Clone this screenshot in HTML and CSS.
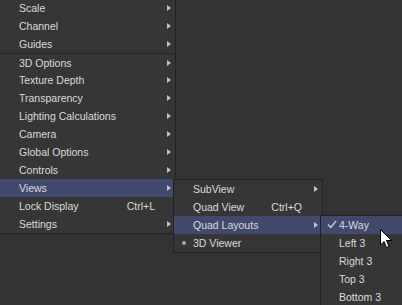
FILE: index.html
```html
<!DOCTYPE html>
<html lang="en">
<head>
    <meta charset="UTF-8">
    <title>Viewer Menu</title>
    <link rel="stylesheet" href="styles.css">
</head>
<body>
    <div class="menu main-menu">
        <div class="item">Scale<span class="arrow"></span></div>
        <div class="item">Channel<span class="arrow"></span></div>
        <div class="item">Guides<span class="arrow"></span></div>
        <div class="item sep">3D Options<span class="arrow"></span></div>
        <div class="item">Texture Depth<span class="arrow"></span></div>
        <div class="item">Transparency<span class="arrow"></span></div>
        <div class="item">Lighting Calculations<span class="arrow"></span></div>
        <div class="item">Camera<span class="arrow"></span></div>
        <div class="item">Global Options<span class="arrow"></span></div>
        <div class="item">Controls<span class="arrow"></span></div>
        <div class="item active">Views<span class="arrow"></span></div>
        <div class="item">Lock Display<span class="shortcut">Ctrl+L</span></div>
        <div class="item">Settings<span class="arrow"></span></div>
    </div>

    <div class="menu sub-menu views-menu">
        <div class="item">SubView<span class="arrow"></span></div>
        <div class="item">Quad View<span class="shortcut">Ctrl+Q</span></div>
        <div class="item active">Quad Layouts<span class="arrow"></span></div>
        <div class="item"><span class="bullet"></span>3D Viewer</div>
    </div>

    <div class="menu sub-menu layouts-menu">
        <div class="item active">
            <svg class="check" width="10" height="9" viewBox="0 0 10 9">
                <polyline points="1,4.5 3.8,7.5 9,1" fill="none" stroke="#b8bccb" stroke-width="1.7"/>
            </svg>4-Way
        </div>
        <div class="item">Left 3</div>
        <div class="item">Right 3</div>
        <div class="item">Top 3</div>
        <div class="item">Bottom 3</div>
    </div>

    <svg class="cursor" width="13" height="20" viewBox="0 0 13 20">
        <path d="M0.5,0.5 L0.5,16 L4,12.5 L6.5,18.5 L9,17.5 L6.5,11.5 L11.5,11.5 Z" fill="#fff" stroke="#000" stroke-width="1"/>
    </svg>
</body>
</html>
```

FILE: styles.css
```css
body {
    margin: 0;
    background-color: #333333;
    font-family: "Liberation Sans", Arial, sans-serif;
    font-size: 10.5px;
    color: #dadada;
    height: 305px;
    overflow: hidden;
    position: relative;
}
.menu {
    background-color: #363636;
    border: 1px solid #222222;
}
.main-menu {
    width: 175px;
    margin-top: -2px;
    border-left: none;
}
.item {
    height: 18px;
    line-height: 18px;
    padding-left: 19px;
    display: flex;
    align-items: center;
    position: relative;
    white-space: nowrap;
}
.item.sep {
    border-top: 1px solid #262626;
    height: 17px;
}
.item.active {
    background-color: #414a6d;
}
.arrow {
    margin-left: auto;
    margin-right: 4px;
    width: 0;
    height: 0;
    border-left: 4px solid #c2c2c2;
    border-top: 3.5px solid transparent;
    border-bottom: 3.5px solid transparent;
}
.shortcut {
    margin-left: auto;
    padding-right: 20px;
}
.sub-menu {
    position: absolute;
}
.views-menu {
    left: 173px;
    top: 179px;
    width: 148px;
}
.layouts-menu {
    left: 320px;
    top: 215px;
    width: 100px;
}
.layouts-menu .item {
    padding-left: 18px;
}
.bullet {
    position: absolute;
    left: 8px;
    top: 7px;
    width: 4px;
    height: 4px;
    border-radius: 50%;
    background-color: #a8a8a8;
}
.check {
    position: absolute;
    left: 6px;
    top: 4px;
}
.cursor {
    position: absolute;
    left: 380px;
    top: 229px;
}
```
